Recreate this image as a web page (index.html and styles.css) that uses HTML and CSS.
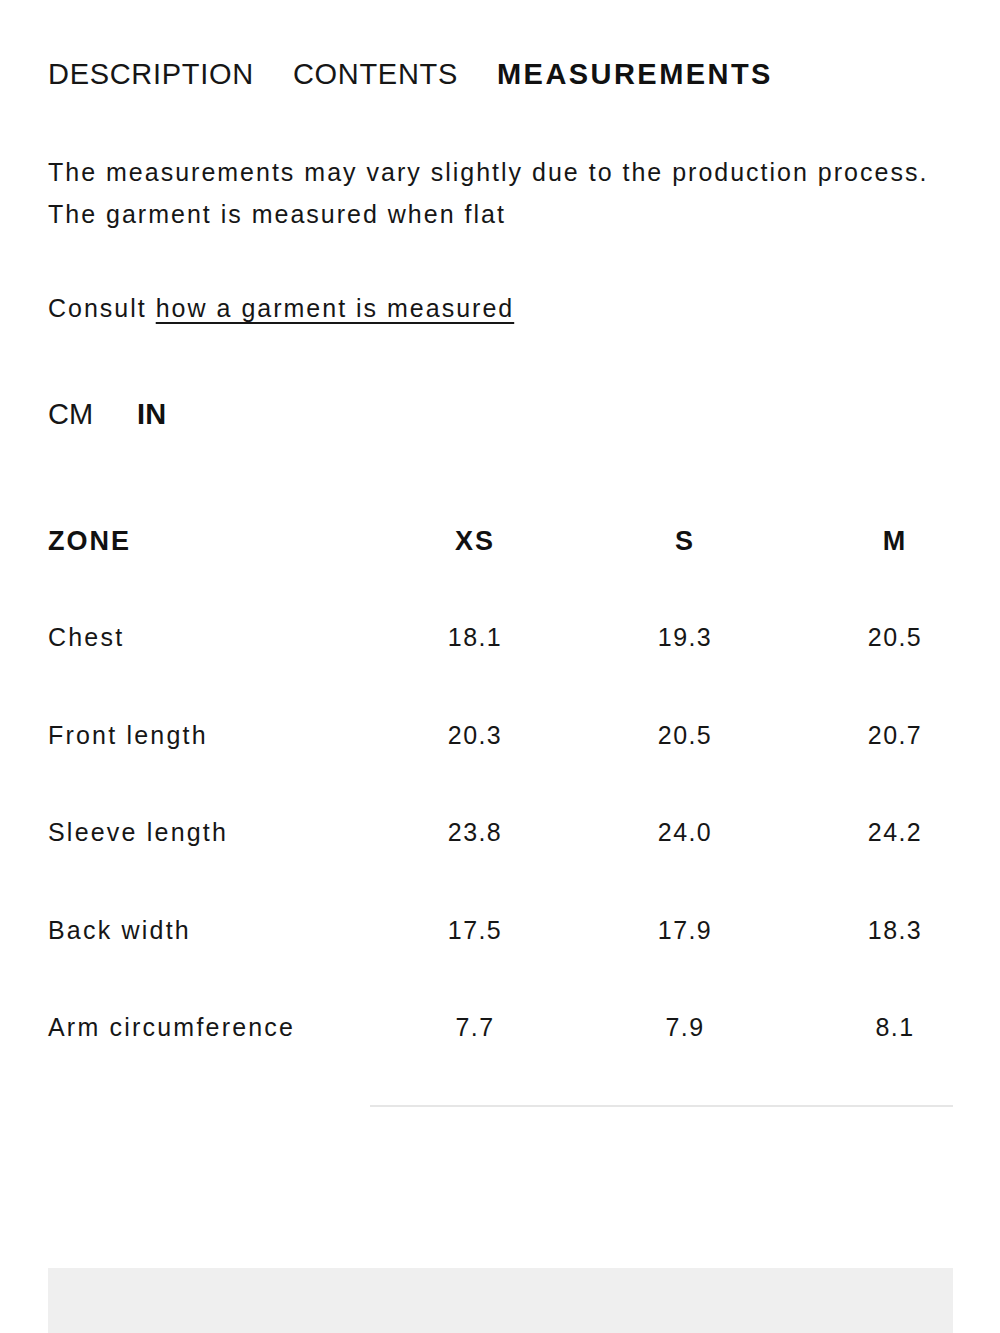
FILE: index.html
```html
<!DOCTYPE html>
<html lang="en">
<head>
<meta charset="utf-8">
<title>Measurements</title>
<link rel="stylesheet" href="styles.css">
</head>
<body>
<main class="page">
  <nav class="tabs">
    <span class="tab">DESCRIPTION</span>
    <span class="tab">CONTENTS</span>
    <span class="tab tab-active">MEASUREMENTS</span>
  </nav>
  <p class="intro">The measurements may vary slightly due to the production process.<br>The garment is measured when flat</p>
  <p class="consult">Consult <a class="link" href="#">how a garment is measured</a></p>
  <div class="units">
    <span class="unit">CM</span>
    <span class="unit unit-active">IN</span>
  </div>
  <div class="table">
    <div class="row row-head">
      <div class="cell cell-zone">ZONE</div>
      <div class="cell">XS</div>
      <div class="cell">S</div>
      <div class="cell">M</div>
    </div>
    <div class="row">
      <div class="cell cell-zone">Chest</div>
      <div class="cell">18.1</div>
      <div class="cell">19.3</div>
      <div class="cell">20.5</div>
    </div>
    <div class="row">
      <div class="cell cell-zone">Front length</div>
      <div class="cell">20.3</div>
      <div class="cell">20.5</div>
      <div class="cell">20.7</div>
    </div>
    <div class="row">
      <div class="cell cell-zone">Sleeve length</div>
      <div class="cell">23.8</div>
      <div class="cell">24.0</div>
      <div class="cell">24.2</div>
    </div>
    <div class="row">
      <div class="cell cell-zone">Back width</div>
      <div class="cell">17.5</div>
      <div class="cell">17.9</div>
      <div class="cell">18.3</div>
    </div>
    <div class="row">
      <div class="cell cell-zone">Arm circumference</div>
      <div class="cell">7.7</div>
      <div class="cell">7.9</div>
      <div class="cell">8.1</div>
    </div>
  </div>
  <div class="scroll-track"></div>
  <div class="grey-box"></div>
</main>
</body>
</html>
```
FILE: styles.css
```css
html, body {
  margin: 0;
  padding: 0;
  background: #ffffff;
}
body {
  font-family: "Liberation Sans", Arial, Helvetica, sans-serif;
  color: #161616;
  overflow: hidden;
}
.page {
  width: 905px;
  padding: 54px 47px 0 48px;
}
.tabs {
  display: flex;
  gap: 39px;
  height: 40px;
  line-height: 40px;
  font-size: 29px;
}
.tab {
  letter-spacing: 0.7px;
  font-weight: 400;
}
.tab-active {
  font-weight: 700;
  letter-spacing: 2.45px;
  color: #111111;
}
.intro {
  margin: 57px 0 0;
  font-size: 25px;
  line-height: 42px;
  letter-spacing: 2px;
}
.consult {
  margin: 52px 0 0;
  font-size: 25px;
  line-height: 42px;
  letter-spacing: 2px;
}
.link {
  color: inherit;
  text-decoration: underline;
  text-decoration-thickness: 2px;
  text-underline-offset: 5px;
}
.units {
  display: flex;
  gap: 44px;
  margin-top: 65px;
  font-size: 29px;
  line-height: 40px;
}
.unit-active {
  font-weight: 700;
  color: #111111;
}
.table {
  margin-top: 60px;
}
.row {
  display: grid;
  grid-template-columns: 322px repeat(3, 210px);
  height: 97.5px;
  align-items: center;
  font-size: 25px;
  letter-spacing: 1.4px;
}
.row-head {
  height: 95px;
  font-size: 27px;
  font-weight: 700;
  letter-spacing: 2px;
  color: #111111;
}
.cell {
  text-align: center;
  white-space: nowrap;
}
.cell-zone {
  text-align: left;
  letter-spacing: 2.2px;
}
.row-head .cell-zone {
  letter-spacing: 2px;
}
.scroll-track {
  margin: 28px 0 0 322px;
  width: 583px;
  height: 2px;
  background: #e6e6e6;
}
.grey-box {
  margin-top: 161px;
  height: 220px;
  background: #efefef;
}
```
